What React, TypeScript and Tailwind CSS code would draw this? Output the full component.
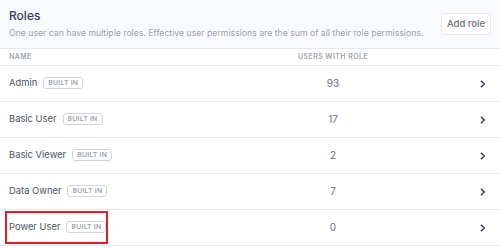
import React from "react";

const roles = [
  { name: "Admin", users: 93 },
  { name: "Basic User", users: 17 },
  { name: "Basic Viewer", users: 2 },
  { name: "Data Owner", users: 7 },
  { name: "Power User", users: 0 },
];

function Chevron() {
  return (
    <svg width="6" height="8" viewBox="0 0 6 8" fill="none">
      <path d="M1.5 1.2L4.3 4L1.5 6.8" stroke="#374151" strokeWidth="1.6" strokeLinecap="round" strokeLinejoin="round" />
    </svg>
  );
}

export default function App() {
  return (
    <div
      className="w-[500px] h-[248px] overflow-hidden bg-white"
      style={{ fontFamily: "Inter, 'Noto Sans', sans-serif" }}
    >
      <div className="h-[49px] bg-[#f9fafb] border-b border-[#e5e7eb] flex items-center justify-between pl-[9px] pr-[9px]">
        <div className="flex flex-col min-w-0">
          <div className="text-[12px] leading-[16px] font-medium text-[#374151] mt-[-1px]">Roles</div>
          <div className="text-[8.7px] leading-[14px] text-[#9ca3af] mt-[2px] whitespace-nowrap">
            One user can have multiple roles. Effective user permissions are the sum of all their role permissions.
          </div>
        </div>
        <button className="shrink-0 h-[22px] w-[50px] border border-[#e5e7eb] rounded-[3px] bg-white text-[9.5px] font-medium text-[#6b7280] whitespace-nowrap">
          Add role
        </button>
      </div>
      <div className="h-[17px] flex items-center border-b border-[#e5e7eb] text-[7px] font-semibold tracking-[0.06em] text-[#9ca3af]">
        <div className="pl-[9px] w-[270px]">NAME</div>
        <div className="w-[126px] text-center">USERS WITH ROLE</div>
      </div>
      {roles.map((r, i) => (
        <div key={r.name} className="h-[36px] flex items-center border-b border-[#e5e7eb]">
          <div className="w-[270px] pl-[9px] flex items-center">
            <div className="relative flex items-center">
              <span className="text-[9.4px] text-[#4b5563]">{r.name}</span>
              <span className="ml-[6px] h-[12px] px-[4px] flex items-center border border-[#d1d5db] rounded-[3px] text-[6.8px] font-semibold text-[#9ca3af] tracking-[0.04em]">
                BUILT IN
              </span>
              {i === 4 && (
                <div className="absolute left-[-4px] top-[-9px] w-[103px] h-[33px] border-2 border-[#e11d2a]" />
              )}
            </div>
          </div>
          <div className="w-[126px] text-center text-[10px] text-[#6b7280]">{r.users}</div>
          <div className="flex-1 flex justify-end pr-[14px]">
            <Chevron />
          </div>
        </div>
      ))}
    </div>
  );
}
